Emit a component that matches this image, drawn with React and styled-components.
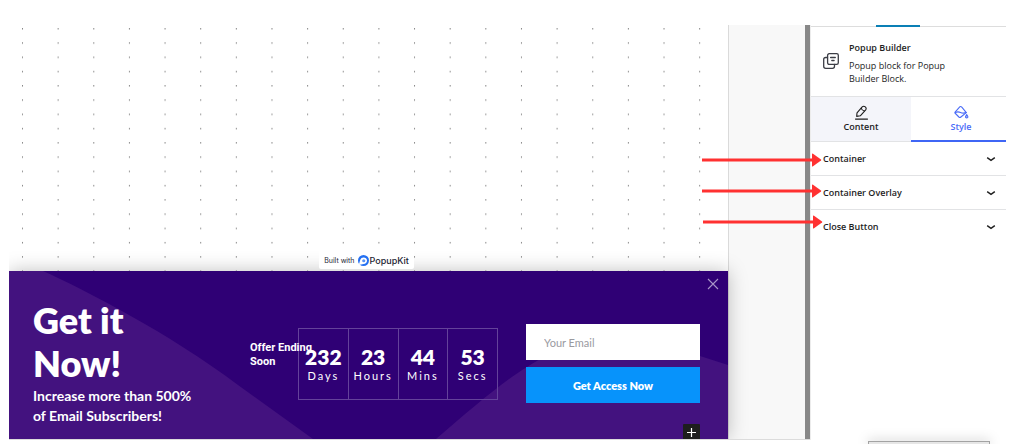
import React from "react";
import styled, { createGlobalStyle } from "styled-components";

const GlobalStyle = createGlobalStyle`
  *, *::before, *::after { box-sizing: border-box; }
  body {
    margin: 0;
    background: #fff;
    font-family: "Open Sans", "Noto Sans", sans-serif;
    color: #1e1e1e;
    overflow: hidden;
  }
  button, input { font: inherit; margin: 0; }
  h1, h2, p, dl, dt, dd { margin: 0; }
`;

const Page = styled.div`
  padding: 25px 15px 0 9px;
`;

const Editor = styled.div`
  display: flex;
  align-items: stretch;
`;

const Workspace = styled.div`
  flex: 1;
  display: flex;
  min-width: 0;
  border-bottom: 1px solid #dcdcdc;
`;

const Canvas = styled.main`
  flex: 1;
  min-width: 0;
  border-right: 1px solid #dadada;
`;

const CanvasGutter = styled.div`
  width: 76px;
  background: #f8f8f8;
`;

const ScrollTrack = styled.div`
  width: 5px;
  background: #888;
`;

const DotArea = styled.div`
  position: relative;
  height: 246px;
  display: flex;
  justify-content: center;
  align-items: flex-end;
  padding-right: 4px;
`;

const Backdrop = styled.svg`
  position: absolute;
  inset: 0;
  width: 100%;
  height: 100%;
`;

const Badge = styled.a`
  position: relative;
  z-index: 2;
  display: flex;
  align-items: center;
  gap: 3px;
  height: 19px;
  margin-bottom: 2px;
  padding: 2px 5px 0;
  border-radius: 2px;
  background: #fff;
  color: #1d2433;
  text-decoration: none;
  font: 400 7px/12px Inter, sans-serif;
  white-space: nowrap;
`;

const BadgeBrand = styled.span`
  display: flex;
  align-items: center;
  gap: 1px;
  font-size: 9px;
  font-weight: 500;
`;

const Popup = styled.section`
  position: relative;
  display: grid;
  grid-template-columns: 1fr 48px 200px 202px;
  padding: 28px 28px 13px 24px;
  background: #2f0075;
  color: #fff;
  font-family: Lato, sans-serif;
  box-shadow: 0 0 18px rgba(0, 0, 0, 0.25);
  clip-path: inset(-20px -30px 0 0);
`;

const Intro = styled.div`
  position: relative;
  display: flex;
  flex-direction: column;
  gap: 1px;
`;

const Title = styled.h1`
  font-size: 36px;
  line-height: 43px;
  font-weight: 800;
`;

const Lead = styled.p`
  font-size: 14px;
  line-height: 20px;
  font-weight: 700;
`;

const OfferLabel = styled.p`
  position: relative;
  z-index: 1;
  padding-top: 42px;
  font: 700 11px/14px Roboto, sans-serif;
  white-space: nowrap;
`;

const Countdown = styled.dl`
  position: relative;
  display: flex;
  align-self: start;
  margin-top: 29px;
`;

const TimeCell = styled.div`
  flex: 1;
  height: 72px;
  display: flex;
  flex-direction: column-reverse;
  justify-content: center;
  align-items: center;
  padding-top: 2px;
  border: 1px solid #64429a;
  & + & { border-left-width: 0; }
`;

const TimeValue = styled.dd`
  font-size: 21px;
  line-height: 22px;
  font-weight: 800;
`;

const TimeUnit = styled.dt`
  font-size: 11px;
  line-height: 16px;
  letter-spacing: 2px;
`;

const SignupForm = styled.form`
  position: relative;
  display: flex;
  flex-direction: column;
  gap: 7px;
  padding: 25px 0 0 28px;
`;

const EmailInput = styled.input`
  width: 100%;
  height: 36px;
  padding: 0 18px;
  border: 0;
  border-radius: 0;
  background: #fff;
  font-size: 11px;
  &::placeholder { color: #9a9a9f; opacity: 1; }
`;

const SubmitButton = styled.button`
  height: 36px;
  border: 0;
  background: #0793fb;
  color: #fff;
  font-size: 11px;
  font-weight: 800;
`;

const CloseButton = styled.button`
  position: absolute;
  top: 7px;
  right: 9px;
  display: flex;
  padding: 0;
  border: 0;
  background: none;
  color: #a995c8;
`;

const AddButton = styled.button`
  position: absolute;
  right: 28px;
  bottom: 0;
  display: flex;
  align-items: center;
  justify-content: center;
  width: 17px;
  height: 15px;
  padding: 2px 0 0;
  border: 0;
  border-radius: 1px 1px 0 0;
  background: #1e1e1e;
  color: #fff;
`;

const Sidebar = styled.aside`
  position: relative;
  width: 196px;
  border-left: 1px solid #ececec;
  font-size: 9px;
`;

const TopTabs = styled.div`
  height: 2px;
  padding-left: 65px;
  background: linear-gradient(#fff 1px, #ddd 1px);
`;

const TopTabMarker = styled.div`
  width: 44px;
  height: 2px;
  background: #0a7fb5;
`;

const BlockCard = styled.header`
  display: flex;
  gap: 10px;
  height: 70px;
  padding: 14px 40px 0 12px;
  border-bottom: 1px solid #e2e3e5;
  & > svg { margin-top: 12px; flex: none; }
`;

const BlockName = styled.h2`
  font-size: 9px;
  line-height: 14px;
  font-weight: 600;
`;

const BlockText = styled.p`
  margin-top: 4px;
  line-height: 13px;
  white-space: nowrap;
`;

const TabsClip = styled.div`
  overflow: hidden;
`;

const Tabs = styled.div`
  display: flex;
  margin-right: -5px;
`;

const Tab = styled.button`
  flex: 1;
  height: 45px;
  display: flex;
  flex-direction: column;
  align-items: center;
  padding: 8px 0 0;
  border: 0;
  border-bottom: ${(p) => (p.$active ? "2px solid #3f66f5" : "1px solid #e2e3e5")};
  background: ${(p) => (p.$active ? "#fff" : "#f4f5fa")};
  color: ${(p) => (p.$active ? "#4a6cf7" : "#1e1e1e")};
  font-size: 9px;
  line-height: 14px;
  font-weight: 600;
`;

const PanelRow = styled.button`
  display: flex;
  align-items: center;
  justify-content: space-between;
  width: 100%;
  height: 34px;
  padding: 0 10px 0 12px;
  border: 0;
  border-bottom: 1px solid ${(p) => (p.$last ? "transparent" : "#e2e3e5")};
  background: #fff;
  color: #1e1e1e;
  font-size: 9px;
  font-weight: 600;
`;

const Pointers = styled.svg`
  position: absolute;
  top: 128px;
  left: -110px;
  pointer-events: none;
`;

const FloatingPanel = styled.div`
  position: fixed;
  right: 31px;
  bottom: 0;
  width: 122px;
  height: 3px;
  border: 1px solid #a3a3a3;
  border-bottom: 0;
  background: #e6e6e6;
  box-shadow: 0 0 12px rgba(0, 0, 0, 0.35);
`;

const TIMES = [
  ["232", "Days"],
  ["23", "Hours"],
  ["44", "Mins"],
  ["53", "Secs"],
];

const PANELS = ["Container", "Container Overlay", "Close Button"];

const POINTERS = [
  [0, 7],
  [0, 38],
  [1, 69],
];

function Dots() {
  return (
    <Backdrop aria-hidden="true">
      <defs>
        <pattern id="dots" x="13" y="3" width="35.64" height="14.26" patternUnits="userSpaceOnUse">
          <rect x="0" y="0" width="1" height="1.5" fill="#858585" />
        </pattern>
      </defs>
      <rect width="100%" height="100%" fill="url(#dots)" />
    </Backdrop>
  );
}

function Waves() {
  return (
    <Backdrop viewBox="0 0 719 168" preserveAspectRatio="none" aria-hidden="true">
      <path d="M0 0H34C76 19 160 62 229 114L304 168H0Z" fill="#43127f" />
      <path d="M427 168C461 139 493 111 518 96C574 60 620 62 691 85L719 94V168Z" fill="#43127f" />
    </Backdrop>
  );
}

function BrandMark() {
  return (
    <svg width="11" height="11" viewBox="0 0 22 22" aria-hidden="true">
      <circle cx="11" cy="11" r="11" fill="#2470f2" />
      <path d="M1 20C4 16 3 9 7 6C12 3 18 6 18 11C18 15 15 18 11 18C8 18 5 20 1 20Z" fill="#fff" />
      <circle cx="11.500" cy="11.500" r="3.200" fill="#5b93f5" />
    </svg>
  );
}

function BlockIcon() {
  return (
    <svg width="16" height="16" viewBox="0 0 16 16" fill="none" stroke="#3b3d45" strokeWidth="1.3" strokeLinecap="round" aria-hidden="true">
      <rect x="4.600" y="0.700" width="10.700" height="10.700" rx="1.600" />
      <path d="M4.500 4.500H2.700Q0.700 4.500 0.700 6.500V13.300Q0.700 15.300 2.700 15.300H9.500Q11.500 15.300 11.500 13.300V11.500" />
      <path d="M7.600 4.500H12.300M8.800 7.500H11.100" />
    </svg>
  );
}

function PencilIcon() {
  return (
    <svg width="15" height="15" viewBox="0 0 14 15" fill="none" stroke="currentColor" strokeWidth="1.1" strokeLinecap="round" strokeLinejoin="round" aria-hidden="true">
      <path d="M2.200 11.400L2.500 7.900L7.700 1.900Q9.100 0.600 10.800 1.900Q12.300 3.300 11.200 4.900L5.800 10.800Z" />
      <path d="M6.700 3.200Q7.300 5.700 10 6M1 14.100H13" />
    </svg>
  );
}

function PaintIcon() {
  return (
    <svg width="15" height="15" viewBox="0 0 15 15" fill="none" stroke="currentColor" strokeWidth="1.1" strokeLinecap="round" strokeLinejoin="round" aria-hidden="true">
      <path d="M5.300 2.300L1.300 6.800Q0.600 7.700 1.400 8.500L4.900 12Q5.900 12.900 6.900 12L12.300 7.600L7.800 2.200Q6.500 0.900 5.300 2.300Z" />
      <path d="M1.300 7.500Q4 6.300 6.500 7.500T12.300 7.600" />
      <path d="M12.700 9.700Q14.300 11.600 13.800 12.400Q12.700 13.600 11.600 12.400Q11.100 11.600 12.700 9.700Z" fill="currentColor" fillOpacity="0.5" />
    </svg>
  );
}

function Chevron() {
  return (
    <svg width="10" height="6" viewBox="0 0 10 6" fill="none" stroke="#1e1e1e" strokeWidth="1.400" aria-hidden="true">
      <path d="M1.200 1.600L5 4.400L8.800 1.600" />
    </svg>
  );
}

export default function App() {
  return (
    <Page>
      <GlobalStyle />
      <Editor>
        <Workspace>
          <Canvas>
            <DotArea>
              <Dots />
              <Badge href="#popupkit">
                Built with
                <BadgeBrand>
                  <BrandMark />
                  PopupKit
                </BadgeBrand>
              </Badge>
            </DotArea>
            <Popup>
              <Waves />
              <Intro>
                <Title>
                  Get it
                  <br />
                  Now!
                </Title>
                <Lead>
                  Increase more than 500%
                  <br />
                  of Email Subscribers!
                </Lead>
              </Intro>
              <OfferLabel>
                Offer Ending
                <br />
                Soon
              </OfferLabel>
              <Countdown>
                {TIMES.map(([value, unit]) => (
                  <TimeCell key={unit}>
                    <TimeUnit>{unit}</TimeUnit>
                    <TimeValue>{value}</TimeValue>
                  </TimeCell>
                ))}
              </Countdown>
              <SignupForm onSubmit={(e) => e.preventDefault()}>
                <EmailInput type="email" placeholder="Your Email" aria-label="Your Email" />
                <SubmitButton type="submit">Get Access Now</SubmitButton>
              </SignupForm>
              <CloseButton type="button" aria-label="Close">
                <svg width="12" height="12" viewBox="0 0 12 12" stroke="currentColor" strokeWidth="1.100">
                  <path d="M1 1L11 11M11 1L1 11" />
                </svg>
              </CloseButton>
              <AddButton type="button" aria-label="Add block">
                <svg width="9" height="9" viewBox="0 0 9 9" stroke="currentColor" strokeWidth="1.200">
                  <path d="M4.500 0V9M0 4.500H9" />
                </svg>
              </AddButton>
            </Popup>
          </Canvas>
          <CanvasGutter />
          <ScrollTrack />
        </Workspace>
        <Sidebar>
          <TopTabs>
            <TopTabMarker />
          </TopTabs>
          <BlockCard>
            <BlockIcon />
            <div>
              <BlockName>Popup Builder</BlockName>
              <BlockText>
                Popup block for Popup
                <br />
                Builder Block.
              </BlockText>
            </div>
          </BlockCard>
          <TabsClip>
            <Tabs>
              <Tab type="button">
                <PencilIcon />
                Content
              </Tab>
              <Tab type="button" $active>
                <PaintIcon />
                Style
              </Tab>
            </Tabs>
          </TabsClip>
          {PANELS.map((name, i) => (
            <PanelRow key={name} type="button" $last={i === PANELS.length - 1}>
              {name}
              <Chevron />
            </PanelRow>
          ))}
          <Pointers width="122" height="80" viewBox="0 0 122 80" aria-hidden="true">
            {POINTERS.map(([x, y]) => (
              <g key={y} transform={`translate(${x} ${y})`} fill="#ff3131">
                <rect x="1" y="-1.500" width="112" height="3" />
                <path d="M111-6Q111-7 112-6.300L120-0.600Q120.600 0 120 0.600L112 6.300Q111 7 111 6Z" />
              </g>
            ))}
          </Pointers>
        </Sidebar>
      </Editor>
      <FloatingPanel />
    </Page>
  );
}
